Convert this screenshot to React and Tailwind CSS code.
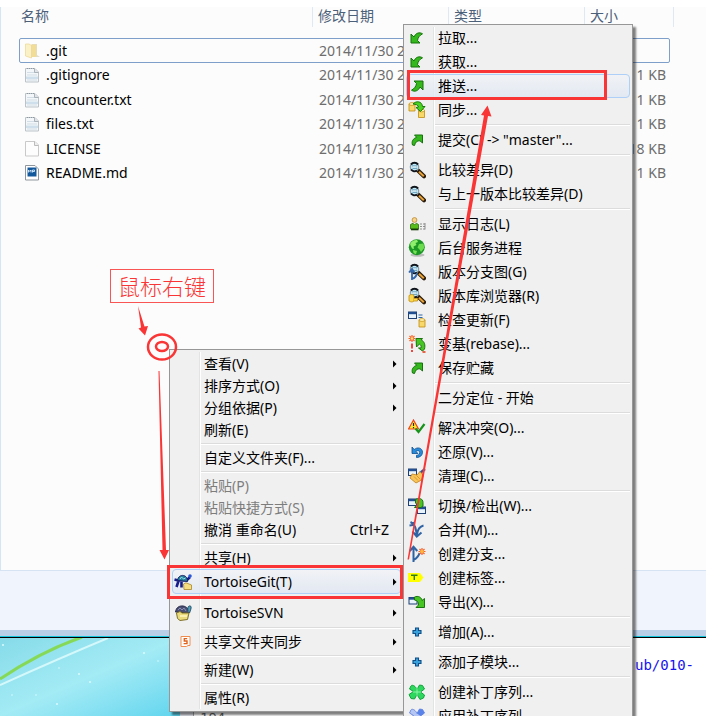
import React from "react";

const files = [
  { name: ".git", icon: "folder", date: "2014/11/30 2", size: "", focused: true },
  { name: ".gitignore", icon: "text", date: "2014/11/30 2", size: "1 KB" },
  { name: "cncounter.txt", icon: "text", date: "2014/11/30 2", size: "1 KB" },
  { name: "files.txt", icon: "text", date: "2014/11/30 2", size: "1 KB" },
  { name: "LICENSE", icon: "blank", date: "2014/11/30 2", size: "18 KB" },
  { name: "README.md", icon: "md", date: "2014/11/30 2", size: "1 KB" },
];

// Each inner array is a group, groups are divided by a separator
const desktopMenu = [
  [
    { label: "查看(V)", submenu: true },
    { label: "排序方式(O)", submenu: true },
    { label: "分组依据(P)", submenu: true },
    { label: "刷新(E)" },
  ],
  [{ label: "自定义文件夹(F)..." }],
  [
    { label: "粘贴(P)", disabled: true },
    { label: "粘贴快捷方式(S)", disabled: true },
    { label: "撤消 重命名(U)", shortcut: "Ctrl+Z" },
  ],
  [
    { label: "共享(H)", submenu: true },
    { label: "TortoiseGit(T)", icon: "turtleGit", submenu: true, active: true, tall: true },
  ],
  [{ label: "TortoiseSVN", icon: "turtleSvn", submenu: true, tall: true }],
  [{ label: "共享文件夹同步", icon: "share", submenu: true }],
  [{ label: "新建(W)", submenu: true }],
  [{ label: "属性(R)" }],
];

const gitMenu = [
  [
    { label: "拉取...", icon: "pull" },
    { label: "获取...", icon: "pull" },
    { label: "推送...", icon: "push", active: true },
    { label: "同步...", icon: "sync" },
  ],
  [{ label: '提交(C) -> "master"...', icon: "commit" }],
  [
    { label: "比较差异(D)", icon: "diff" },
    { label: "与上一版本比较差异(D)", icon: "diff" },
  ],
  [
    { label: "显示日志(L)", icon: "log" },
    { label: "后台服务进程", icon: "globe" },
    { label: "版本分支图(G)", icon: "graph" },
    { label: "版本库浏览器(R)", icon: "browser" },
    { label: "检查更新(F)", icon: "check" },
    { label: "变基(rebase)...", icon: "rebase" },
    { label: "保存贮藏", icon: "commit" },
  ],
  [{ label: "二分定位 - 开始" }],
  [
    { label: "解决冲突(O)...", icon: "resolve" },
    { label: "还原(V)...", icon: "revert" },
    { label: "清理(C)...", icon: "clean" },
  ],
  [
    { label: "切换/检出(W)...", icon: "switch" },
    { label: "合并(M)...", icon: "merge" },
    { label: "创建分支...", icon: "branch" },
    { label: "创建标签...", icon: "tag" },
    { label: "导出(X)...", icon: "export" },
  ],
  [{ label: "增加(A)...", icon: "add" }],
  [{ label: "添加子模块...", icon: "add" }],
  [
    { label: "创建补丁序列...", icon: "patch" },
    { label: "应用补丁序列...", icon: "patchApply" },
  ],
];

const PULL = "M3 5V14H12L9.500 11.500C10 8.500 11.500 6.500 14.500 4.800C11.500 2.800 7.500 4 6 8Z";
const COMMIT = "M6.500 4H14.500V12L12 9.800C9 9.500 7.500 11 6.500 14.500L4.500 14C3.300 10.500 5 7.500 8.700 6.300Z";
const CLOVER = "M9 6.5C7 2 3 1 2.5 4L1.5 6L5.5 8.5L1 11.5L3 15.5L6.5 16L9 11.5L12 16.5L15.5 15L16.5 12L12.5 9L16.5 6L14.5 2.5L11.5 2Z";

const Disk = ({ x, y }) => (
  <g>
    <path d={`M${x} ${y + 1}h6v7h-6z`} fill="#f8d868" stroke="#c08c10" strokeWidth=".8" />
    <ellipse cx={x + 3} cy={y + 1} rx="3" ry="1.4" fill="#fff2ae" stroke="#c08c10" strokeWidth=".7" />
  </g>
);

const Win = ({ x, y }) => (
  <g>
    <rect x={x} y={y} width="8" height="6.5" fill="#e8f3fb" stroke="#1d3f73" />
    <rect x={x} y={y} width="8" height="2.2" fill="#234f91" />
  </g>
);

const Lens = () => (
  <g>
    <path d="M9.500 9L16 15.300" stroke="#2b1c0a" strokeWidth="4.200" strokeLinecap="round" />
    <path d="M11 10.700L15.800 15.300" stroke="#e9a237" strokeWidth="2" />
    <circle cx="6.500" cy="6" r="4.200" fill="#bfeaf8" stroke="#8b9aa4" strokeWidth="1.200" />
    <path d="M3 3.500A4.500 4.500 0 0 1 10 3.500M3 8.500A4.500 4.500 0 0 0 9 9.500" fill="none" stroke="#10151c" strokeWidth="2" />
    <path d="M4 5h5M4.500 7.200h4.500" stroke="#4f87a8" />
    <path d="M4.500 6h4" stroke="#fff" />
  </g>
);

const icons = {
  pull: <path d={PULL} fill="#35b81d" stroke="#13720a" />,
  push: <path d={PULL} fill="#35b81d" stroke="#13720a" transform="rotate(180 9 9)" />,
  commit: <path d={COMMIT} fill="#35b81d" stroke="#13720a" />,
  sync: (
    <g>
      <Disk x={1} y={2} />
      <Disk x={10.5} y={8.5} />
      <path d="M5 3C8-.5 14 0 14.5 5.5L17 5.5 12.5 10.5 8 6.5 10.5 6C10 4 8 3.2 5 3Z" fill="#4bd11f" stroke="#157809" />
    </g>
  ),
  diff: <Lens />,
  log: (
    <g>
      <circle cx="6.5" cy="5" r="2.4" fill="#f9d58a" stroke="#b98734" strokeWidth=".8" />
      <path d="M2.5 9.5L5 8.2 6.5 10 8.3 8.2 10.5 9.5V14H2.5Z" fill="#58bd18" stroke="#2e6b0d" strokeWidth=".8" />
      <path d="M3 14.500h7.500" stroke="#143b07" strokeWidth="1.6" />
      <path d="M12 9h2M12 11.500h2M12 14h2M15 9h2M15 11.500h2M15 14h2M17 8v6.500" stroke="#858585" strokeWidth=".9" />
    </g>
  ),
  globe: (
    <g>
      <ellipse cx="9.5" cy="16" rx="7" ry="1.8" fill="#bcbcbc" />
      <circle cx="8.8" cy="8.2" r="8" fill="#1c9725" />
      <path d="M2 5C4 1.5 7 .8 9 1L10 3 7.5 4 8.5 6 5.5 7.5 6 10 4 9.5Z" fill="#8fee6b" />
      <path d="M11 5L15.5 4.5 16.2 9 13 13 11.5 10.5 9.5 8.5Z" fill="#6bdc4e" />
      <path d="M5 11L9 12 8 15.2 5.6 14Z" fill="#77e255" />
    </g>
  ),
  graph: (
    <g>
      <Lens />
      <path d="M4 17V6M1 9.500L4 6 6.500 9.500M4 16C7 15 8.500 13 9 10" fill="none" stroke="#3466a9" strokeWidth="1.800" />
    </g>
  ),
  browser: (
    <g>
      <Lens />
      <path d="M1 8.500C3 7 5 7.500 6 8.500V14C4.500 15.500 2.500 15 1 14Z" fill="#fbd84b" stroke="#c08c10" strokeWidth=".8" />
      <path d="M6 11.500h3.500v2.500H6" fill="#fbd84b" stroke="#c08c10" strokeWidth=".8" />
    </g>
  ),
  check: (
    <g>
      <Win x={0.5} y={1} />
      <path d="M10.5 4h4M10.5 6.5h4" stroke="#2c67a8" />
      <Disk x={11} y={8} />
    </g>
  ),
  rebase: (
    <g>
      <path d="M4 0v7M.5 3.5h7M1.5 1l5 5M6.5 1l-5 5" stroke="#f4622a" strokeWidth="1.2" />
      <circle cx="4" cy="3.5" r="1.3" fill="#ffe27a" />
      <path d="M4 8.5v5M4 15v2" stroke="#e8201a" strokeWidth="1.6" />
      <path d="M8 3.500H14.500L13.300 5C16.500 6.500 17.500 10 16.500 14L14.500 16 10.500 13H13C13.500 11 12.800 10 11.500 9L8.500 12Z" fill="#47c522" stroke="#18740d" />
      <path d="M14.500 17h3" stroke="#e8401a" strokeWidth="1.600" />
    </g>
  ),
  resolve: (
    <g>
      <path d="M5.5 1L10.5 10H.5Z" fill="#ffe92e" stroke="#ed401c" strokeWidth="1.2" />
      <path d="M5.5 4v3M5.5 8v1.2" stroke="#222" strokeWidth="1.2" />
      <path d="M7.5 9.5L10.5 13 16.5 5" fill="none" stroke="#17951b" strokeWidth="2.2" />
    </g>
  ),
  revert: (
    <path d="M4 4V10.500H10L8 8.500C9.500 7 12 7.500 11.700 10C11.400 11.500 10 12.300 8.500 12.300V14.500C12 14.500 14.400 12.500 14.500 9.200C14.500 5 9.500 3.500 6.200 6.500Z" fill="#2a8bd9" stroke="#0e4f91" strokeWidth=".8" />
  ),
  clean: (
    <g>
      <Win x={0.5} y={2} />
      <path d="M12 6L17 2" stroke="#25599c" strokeWidth="2.4" />
      <path d="M4 7L9 8 12 4.5 15.5 8.5 13.5 13 8 16 2 11Z" fill="#f9c55a" stroke="#c07d14" strokeWidth=".8" />
      <path d="M6 9.5l4 4M8.5 8.5l4 4" stroke="#d99a2c" />
    </g>
  ),
  switch: (
    <g>
      <Win x={0.5} y={2} />
      <Win x={9.5} y={10} />
      <path d="M7.5 2.5C11 .5 15 1.5 15 5.5V9L13 10.5 6.5 10.5 9 7.5 7.5 6Z" fill="#47c522" stroke="#18740d" />
    </g>
  ),
  merge: (
    <path d="M2.500 1C6.500 3 8 6 8.800 15M15.500 4.500C11.500 5.500 9.800 8 9 13M4.500 10.500L8.800 15.500 13.500 11.500M1.500 4.500L5.500 4 5 1" fill="none" stroke="#2f63a3" strokeWidth="2" />
  ),
  branch: (
    <g>
      <path d="M5.5 17V3M1.8 6L5.5 1.8 9.3 6M5.7 15C9 13 11 10.5 11.5 8" fill="none" stroke="#2f63a3" strokeWidth="2" />
      <path d="M14 3v7M10.500 6.5h7M11.5 4l5 5M16.5 4l-5 5" stroke="#f4622a" strokeWidth="1.2" />
      <circle cx="14" cy="6.5" r="1.8" fill="#ffb83d" />
    </g>
  ),
  tag: (
    <g>
      <path d="M0 4H12L15.500 8.500 12 13H0Z" fill="#ffff00" />
      <path d="M3 6.200h6.500M6.300 6.200v4.800" stroke="#2c7c1a" strokeWidth="1.4" />
    </g>
  ),
  export: (
    <g>
      <Win x={1} y={4.5} />
      <path d="M6.5 4C10 2.5 13.5 4 14 7.5L16.5 5.5V14.5H8L10.5 12C10.5 9 9.5 7.5 6.5 7Z" fill="#47c522" stroke="#18740d" />
    </g>
  ),
  add: <path d="M7.500 5H10.500V7.500H13V10.500H10.500V13H7.500V10.500H5V7.500H7.500Z" fill="#3aa0dc" stroke="#0d4f86" strokeWidth="1.1" />,
  patch: (
    <g>
      <path d={CLOVER} fill="#2ed85e" stroke="#12a23c" />
      <path d="M9 5v8M5 9h8" stroke="#8af5a6" />
    </g>
  ),
  patchApply: (
    <g>
      <path d={CLOVER} fill="#b5c6f3" stroke="#6f8be0" />
      <path d="M9 6.5L11.5 2 14.5 2.5 16.5 6 12.5 9Z" fill="#5a83ea" />
    </g>
  ),
  turtleGit: (
    <g>
      <path d="M.5 6.500L4 7.500 13 7 16 4M4.500 8L2.500 14M7.500 9V14.500" stroke="#171c8c" strokeWidth="2.6" fill="none" />
      <path d="M3.5 7.5C4 3.5 7 2 9.5 2.5S13.5 5 13.5 8.5Z" fill="#27809b" stroke="#182066" />
      <path d="M6 6l1.5-2 2 2 2-1" stroke="#8fe3ef" fill="none" />
      <circle cx="16" cy="3" r="1.8" fill="#2c58d6" />
      <path d="M9.500 11L12 9.8 17.500 12V16.5H10Z" fill="#f6dd82" stroke="#a98527" strokeWidth=".8" />
    </g>
  ),
  turtleSvn: (
    <g>
      <path d="M1.5 8C2 3.5 5.5 1.5 9 2S15 5 15 9Z" fill="#4b4f72" stroke="#262a49" />
      <path d="M4 6l2-2 2 2 2-2 2 3" stroke="#8b90b7" fill="none" />
      <path d="M14 7C13 3 15 .8 17 2.5C17.5 4 16.5 6 15.5 9" fill="#4f9fb8" stroke="#1f4f68" />
      <path d="M2.5 9L6 7.5 8 9H15L13.5 15.5 6 16.5 3.5 14.5Z" fill="#eadb7c" stroke="#7f7028" />
      <path d="M6 12h7" stroke="#fff6bd" strokeWidth="1.6" />
    </g>
  ),
  share: (
    <g>
      <path d="M7 3.500H16V12.500H14L12.500 13.500H7Z" fill="#fff" stroke="#f08d4e" />
      <path d="M13.200 5.600H10.300V8H13V10.600H9.600" fill="none" stroke="#e0621a" strokeWidth="1.4" />
    </g>
  ),
  folder: (
    <g>
      <path d="M9 2H14V13L17 15H9Z" fill="#dedbd0" />
      <path d="M8 2.5H13.5V15H8Z" fill="#f1dc98" />
      <path d="M2.5 2H6L8.5 3.5V16L2.5 14Z" fill="#fbf1c7" stroke="#ecd68f" strokeWidth=".7" />
    </g>
  ),
  text: (
    <g>
      <path d="M2.5 2.5H12L15.5 6V16H2.5Z" fill="#f3f7fa" stroke="#bcc3c8" />
      <path d="M4 6.5h9M4 9h10M4 14h10" stroke="#d3dde5" />
      <path d="M3 10.5H15V13H3Z" fill="#cfe0ec" />
      <path d="M4 2.5h7" stroke="#8f989e" strokeDasharray="1 1" />
      <path d="M11.5 2.5V6.5H15.5" fill="#dfe4e8" stroke="#aab3b9" />
    </g>
  ),
  blank: (
    <g>
      <path d="M2.5 1.5H12L15.5 5V16H2.5Z" fill="#fdfdfd" stroke="#c9c9c9" />
      <path d="M11.5 1.5V5.5H15.5" fill="#eee" stroke="#bbb" />
    </g>
  ),
  md: (
    <g>
      <path d="M2.5 1.5H12L15.5 5V16H2.5Z" fill="#fff" stroke="#8f979c" />
      <path d="M4.5 3.5H13.5V12.5H4.5Z" fill="#15599d" />
      <path d="M5.5 8.5V6L6.8 7.5 8 6V8.5M9.5 8.5V6M9.5 6H11.5V7.5H9.5" fill="none" stroke="#d8ebfa" strokeWidth=".9" />
    </g>
  ),
};

const Icon = ({ name }) => (
  <svg viewBox="0 0 18 18" className="size-[18px] shrink-0" aria-hidden="true">
    {icons[name]}
  </svg>
);

const MenuItem = ({ item, height }) => (
  <button
    role="menuitem"
    disabled={item.disabled}
    className={`relative flex w-full items-center rounded-sm border pr-[3px] text-left whitespace-nowrap ${height} ${
      item.active
        ? "border-[#aecff7] bg-linear-to-b from-[#f1f3f7]/80 to-[#dfe7f3]/80"
        : "border-transparent"
    } ${item.disabled ? "text-[#7d7d7d]" : "text-black"}`}
  >
    <span className="flex w-5 shrink-0 justify-center">
      {item.icon && <Icon name={item.icon} />}
    </span>
    <span className="ml-[11px] flex-1">{item.label}</span>
    {item.shortcut && <span className="mr-2">{item.shortcut}</span>}
    {item.submenu && (
      <svg viewBox="0 0 4 8" className="h-2 w-1" aria-hidden="true">
        <path d="M0 .5L3.500 4L0 7.500Z" fill="#000" />
      </svg>
    )}
  </button>
);

const ContextMenu = ({ groups, label, className, rowHeight }) => (
  <div
    role="menu"
    aria-label={label}
    className={`absolute border border-[#979797] bg-[#f0f0f0] px-0.5 shadow-[3px_3px_2px_rgba(0,0,0,0.5)] ${className}`}
  >
    <div className="absolute inset-y-0.5 left-[29px] w-0.5 border-l border-[#e2e3e3] bg-white" />
    {groups.map((group, i) => (
      <React.Fragment key={i}>
        {i > 0 && (
          <div role="separator" className="py-0.5 pl-[29px]">
            <div className="h-0.5 border-t border-[#dcdcdc] bg-white" />
          </div>
        )}
        {group.map((item) => (
          <MenuItem key={item.label} item={item} height={item.tall ? "h-[25px]" : rowHeight} />
        ))}
      </React.Fragment>
    ))}
  </div>
);

const FileTable = () => (
  <table className="w-full table-fixed border-collapse">
    <colgroup>
      <col />
      <col className="w-[136px]" />
      <col className="w-[136px]" />
      <col className="w-[86px]" />
    </colgroup>
    <thead>
      <tr className="h-[31px] align-top text-left text-[#4c607a]">
        <th className="h-[31px] p-0 pl-0.5 font-normal">
          <div className="h-5 leading-[18px]">名称</div>
        </th>
        {["修改日期", "类型", "大小"].map((title) => (
          <th key={title} className="p-0 font-normal last:pr-0">
            <div className="h-5 border-l border-[#dfe9f5] pl-[5px] leading-[18px]">{title}</div>
          </th>
        ))}
      </tr>
    </thead>
    <tbody>
      {files.map((file) => (
        <tr
          key={file.name}
          className={`odd:h-[25px] even:h-6 ${
            file.focused ? "rounded-xs outline -outline-offset-1 outline-[#7f9fcb]" : ""
          }`}
        >
          <td className="p-0">
            <div className="flex items-center gap-[5px] pl-1">
              <Icon name={file.icon} />
              <span>{file.name}</span>
            </div>
          </td>
          <td className="overflow-hidden p-0 pl-[7px] whitespace-nowrap text-[#6d6d6d]">{file.date}</td>
          <td className="p-0"></td>
          <td className="p-0 pr-1 text-right whitespace-nowrap text-[#6d6d6d]">{file.size}</td>
        </tr>
      ))}
    </tbody>
  </table>
);

const Wallpaper = () => (
  <div className="w-[180px] shrink-0 bg-linear-to-br from-[#86dbe9] via-[#a3ebf5] to-[#5fd5ee]">
    <svg viewBox="0 0 180 78" className="h-full w-full" preserveAspectRatio="xMinYMin slice" aria-hidden="true">
      <path d="M0 47Q60 20 108 0" fill="none" stroke="#d5f8fb" strokeWidth="2" />
      <path d="M0 41Q40 14 82 -1" fill="none" stroke="#86d957" strokeWidth="3" />
      <g fill="#dcfafd">
        <circle cx="79" cy="36" r="1" />
        <circle cx="59" cy="30" r=".8" />
        <circle cx="90" cy="44" r="1" />
        <circle cx="36" cy="57" r=".8" />
        <circle cx="57" cy="66" r="1" />
        <circle cx="144" cy="15" r="1" />
        <circle cx="158" cy="23" r=".8" />
        <circle cx="12" cy="57" r=".8" />
        <circle cx="3" cy="7" r="1" />
      </g>
    </svg>
  </div>
);

// Red pen marks drawn over the windows
const Annotations = () => (
  <svg className="pointer-events-none absolute top-0 left-0 h-[709px] w-[706px]" viewBox="0 7 706 709" aria-hidden="true">
    <g fill="none" stroke="#fa3535" strokeWidth="3">
      <ellipse cx="162" cy="347" rx="14" ry="12.5" strokeWidth="2.5" />
      <ellipse cx="162" cy="346.5" rx="6" ry="4.5" strokeWidth="2.5" />
      <rect x="408.5" y="71.5" width="197" height="27" />
      <rect x="168.5" y="566.5" width="233" height="31" />
    </g>
    <g fill="#fa3535">
      <path d="M138 306L144.500 326.500L148 326L145 335.500L138.500 328.500L141 327.500Z" />
      <path d="M158.500 371H159.500L166 550H169L164.500 559.500L159.500 550H162.500Z" />
      <path d="M407.500 559.500L484 115.500L481 115L487.500 105.500L491.500 116.500L488 116L409 559.500Z" />
    </g>
  </svg>
);

const App = () => {
  return (
    <div className="h-screen bg-white pt-[7px] pr-2 pb-[9px] font-['Noto_Sans','Noto_Sans_CJK_SC',sans-serif] text-[14px] leading-5 text-black">
      <div className="relative flex h-full flex-col overflow-hidden">
        {/* Explorer window */}
        <main className="relative flex-1 border-l border-[#d6e5f5] bg-[#fcfcfc] pr-9 pl-[18px]">
          <FileTable />
          <div className="absolute top-0 right-8 h-5 border-r border-[#dfe9f5]" />
        </main>
        <div className="h-[60px] shrink-0 border-t border-[#d6e3f2] bg-[#f0f4fc]" />
        <div className="h-2 shrink-0 border-b border-black bg-[#b9cfe8]">
          <div className="mt-1.5 h-px bg-[#12c4dc]" />
        </div>

        {/* Desktop and editor behind the explorer */}
        <div className="flex h-[78px] shrink-0">
          <Wallpaper />
          <div className="w-3.5 border-r border-[#a0a0a0] bg-[#e3e5ee]" />
          <div className="flex min-w-0 flex-1 flex-col pr-3 pl-1.5 font-['DejaVu_Sans_Mono',monospace] text-[14px]">
            <p className="mt-[17px] text-right text-[#1414f0]">ub/010-</p>
            <p className="mt-[35px] leading-4 text-[#666]">194:</p>
          </div>
        </div>

        {/* Context menus */}
        <ContextMenu
          label="资源管理器"
          groups={desktopMenu}
          rowHeight="h-[22px]"
          className="top-[342px] left-[169px] w-[235px] pt-[3px] pb-0.5"
        />
        <ContextMenu
          label="TortoiseGit"
          groups={gitMenu}
          rowHeight="h-6"
          className="top-[17px] left-[403px] w-[230px] py-px"
        />

        <p className="absolute top-[262px] left-[110px] border border-[#f95555] px-[7px] text-[22px] leading-8 font-light text-[#fa3535]">
          鼠标右键
        </p>
        <Annotations />
      </div>
    </div>
  );
};

export default App;
